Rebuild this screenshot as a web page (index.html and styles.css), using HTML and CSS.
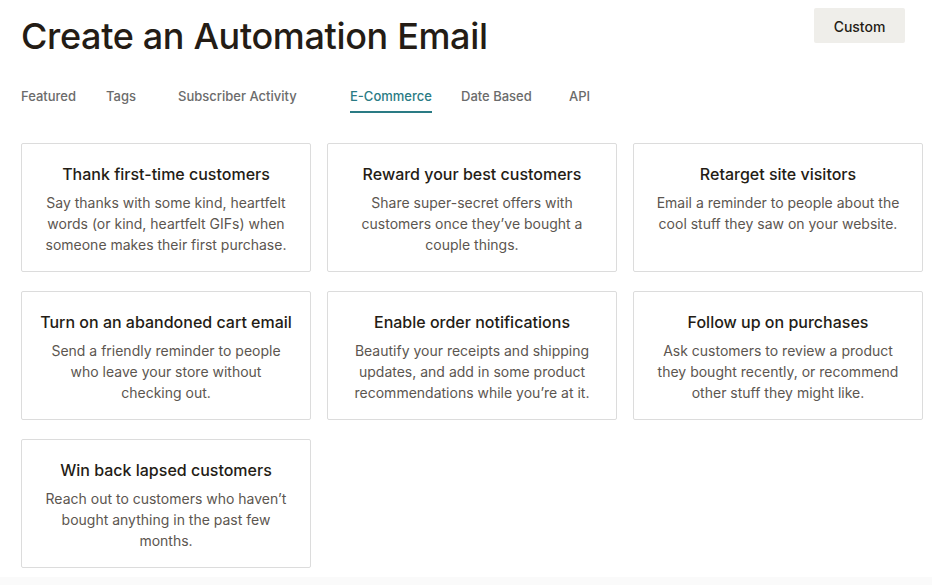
FILE: index.html
```html
<!DOCTYPE html>
<html>
<head>
<meta charset="utf-8">
<link rel="stylesheet" href="styles.css">
</head>
<body>
<div class="page">
  <header class="head">
    <h1 class="title">Create an Automation Email</h1>
    <button class="custom">Custom</button>
  </header>
  <nav class="tabs">
    <span class="tab">Featured</span>
    <span class="tab">Tags</span>
    <span class="tab">Subscriber Activity</span>
    <span class="tab active">E-Commerce</span>
    <span class="tab">Date Based</span>
    <span class="tab">API</span>
  </nav>
  <section class="grid">
    <div class="card"><h2>Thank first-time customers</h2><p>Say thanks with some kind, heartfelt words (or kind, heartfelt GIFs) when someone makes their first purchase.</p></div>
    <div class="card"><h2>Reward your best customers</h2><p>Share super-secret offers with customers once they’ve bought a couple things.</p></div>
    <div class="card"><h2>Retarget site visitors</h2><p>Email a reminder to people about the cool stuff they saw on your website.</p></div>
    <div class="card"><h2>Turn on an abandoned cart email</h2><p>Send a friendly reminder to people who leave your store without checking out.</p></div>
    <div class="card"><h2>Enable order notifications</h2><p>Beautify your receipts and shipping updates, and add in some product recommendations while you’re at it.</p></div>
    <div class="card"><h2>Follow up on purchases</h2><p>Ask customers to review a product they bought recently, or recommend other stuff they might like.</p></div>
    <div class="card"><h2>Win back lapsed customers</h2><p>Reach out to customers who haven’t bought anything in the past few months.</p></div>
  </section>
</div>
<footer class="foot"></footer>
</body>
</html>
```
FILE: styles.css
```css
* { box-sizing: border-box; }
html, body { margin: 0; padding: 0; background: #fff; }
body { font-family: Inter, "Liberation Sans", sans-serif; color: #241c15; }
.page { padding: 8px 9px 0 21px; }
.head { display: flex; justify-content: space-between; align-items: flex-start; }
.title { margin: 6px 0 0; font-size: 36px; font-weight: 500; letter-spacing: -0.35px; line-height: 44px; color: #241c15; }
.custom {
  margin-right: 18px; width: 91px; height: 35px; padding: 2px 0 0; border: none; border-radius: 2px;
  background: #efeeea; font-family: inherit; font-size: 14px; font-weight: 500; color: #241c15;
}
.tabs { display: grid; grid-template-columns: 85px 72px 172px 111px 108px auto; margin-top: 27px; height: 49px; }
.tab { font-size: 13px; font-weight: 500; color: #6b6b6b; line-height: 22px; }
.tab.active { color: #2a7b84; justify-self: start; border-bottom: 2px solid #2a7b84; height: 28px; }
.grid { display: grid; grid-template-columns: repeat(3, 290px); column-gap: 16px; row-gap: 19px; margin-top: 9px; }
.card { height: 129px; border: 1px solid #dcdcdc; border-radius: 2px; padding: 19px 8px 0; text-align: center; }
.card h2 { margin: 0; font-size: 16px; font-weight: 500; line-height: 22px; color: #241c15; white-space: nowrap; }
.card p { margin: 7px 0 0; padding: 0 12px; font-size: 14px; line-height: 21px; color: #5c5650; }
.foot { position: fixed; left: 0; right: 0; bottom: 0; height: 8px; background: #fafafa; }
```
